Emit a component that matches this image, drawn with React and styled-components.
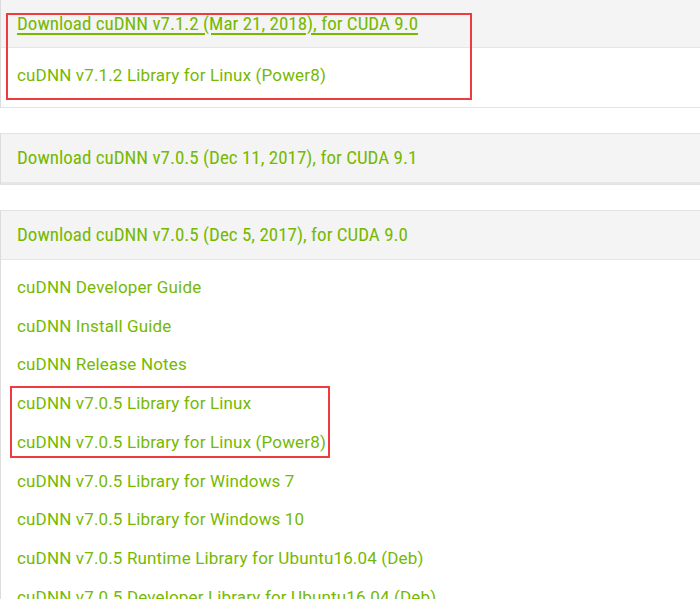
import React from 'react';
import styled, { createGlobalStyle } from 'styled-components';

const GlobalStyle = createGlobalStyle`
  html, body {
    margin: 0;
    padding: 0;
    background: #fff;
  }
  body {
    font-family: "Roboto", "Liberation Sans", sans-serif;
    overflow: hidden;
  }
`

const Page = styled.div`
  position: relative;
  width: 700px;
  height: 599px;
  overflow: hidden;
`

const Stack = styled.div`
  display: flex;
  flex-direction: column;
  gap: 25px;
  margin-top: -2px;
  width: 720px;
`

const Panel = styled.section`
  border: 1px solid #e3e3e3;
  border-right: none;
  border-left-color: #dcdcdc;
  background: #fff;
`

const PanelHeader = styled.div`
  height: 48px;
  display: flex;
  align-items: center;
  padding-left: 16px;
  background: #f4f4f4;
  border-bottom: ${({ closed }) => (closed ? '2px' : '1px')} solid #e6e6e6;
`

const HeaderLink = styled.a`
  font-family: "Liberation Sans Narrow", "Roboto Condensed", "Liberation Sans", sans-serif;
  font-size: 19px;
  color: #76b900;
  text-decoration: ${({ hovered }) => (hovered ? 'underline' : 'none')};
  text-decoration-thickness: 2px;
  text-underline-offset: 3px;
  cursor: pointer;
`

const PanelBody = styled.ul`
  list-style: none;
  margin: 0;
  padding: 8px 0 12px 16px;
`

const Item = styled.li`
  line-height: 38.75px;
  font-size: 17px;
  letter-spacing: 0.15px;
  color: #76b900;
  white-space: nowrap;
  cursor: pointer;
`

const Mark = styled.div`
  position: absolute;
  border: 2px solid #f03a3e;
  pointer-events: none;
`

const panels = [
  {
    title: 'Download cuDNN v7.1.2 (Mar 21, 2018), for CUDA 9.0',
    hovered: true,
    items: ['cuDNN v7.1.2 Library for Linux (Power8)'],
  },
  {
    title: 'Download cuDNN v7.0.5 (Dec 11, 2017), for CUDA 9.1',
    items: [],
  },
  {
    title: 'Download cuDNN v7.0.5 (Dec 5, 2017), for CUDA 9.0',
    items: [
      'cuDNN Developer Guide',
      'cuDNN Install Guide',
      'cuDNN Release Notes',
      'cuDNN v7.0.5 Library for Linux',
      'cuDNN v7.0.5 Library for Linux (Power8)',
      'cuDNN v7.0.5 Library for Windows 7',
      'cuDNN v7.0.5 Library for Windows 10',
      'cuDNN v7.0.5 Runtime Library for Ubuntu16.04 (Deb)',
      'cuDNN v7.0.5 Developer Library for Ubuntu16.04 (Deb)',
    ],
  },
];

// red annotation boxes drawn over the screenshot
const marks = [
  { left: 6, top: 13, width: 466, height: 87 },
  { left: 10, top: 386, width: 320, height: 72 },
];

const App = () => {
  return (
    <Page>
      <GlobalStyle />
      <Stack>
        {panels.map((panel, index) => (
          <Panel key={`panel${index}`}>
            <PanelHeader closed={panel.items.length === 0}>
              <HeaderLink hovered={panel.hovered}>{panel.title}</HeaderLink>
            </PanelHeader>
            {panel.items.length > 0 && (
              <PanelBody>
                {panel.items.map((item) => (
                  <Item key={item}>{item}</Item>
                ))}
              </PanelBody>
            )}
          </Panel>
        ))}
      </Stack>
      {marks.map((m, i) => (
        <Mark
          key={`mark${i}`}
          style={{ left: m.left, top: m.top, width: m.width - 4, height: m.height - 4 }}
        />
      ))}
    </Page>
  )
};

export default App;
